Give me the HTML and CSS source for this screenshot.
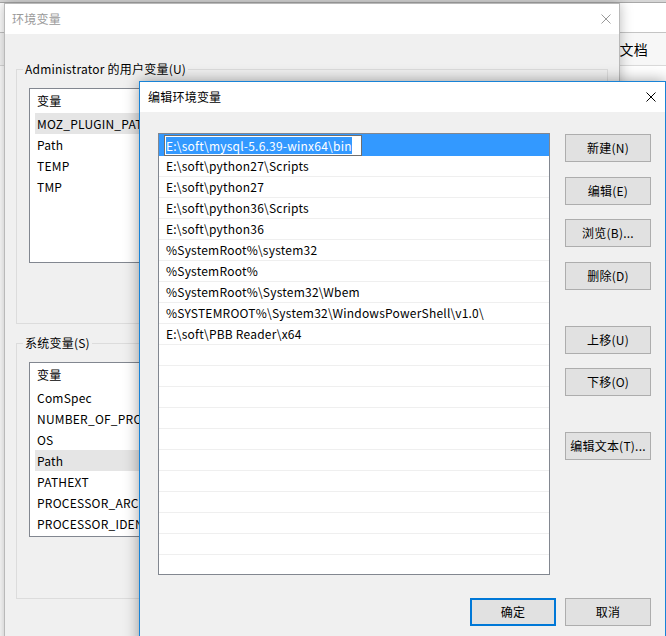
FILE: index.html
```html
<!DOCTYPE html>
<html lang="zh-CN">
<head>
<meta charset="utf-8">
<title>编辑环境变量</title>
<link rel="stylesheet" href="styles.css">
</head>
<body>
<div class="desktop">
  <div class="bgwin">
    <div class="bg-top"></div>
    <div class="bg-band1"></div>
    <div class="bg-band2">我的文档</div>
    <div class="bg-band3"></div>
  </div>

  <section class="win win-back">
    <header class="titlebar">
      <span class="title title-inactive">环境变量</span>
      <svg class="close-x" width="10" height="10" viewBox="0 0 10 10"><path d="M0.5 0.5 L9.5 9.5 M9.5 0.5 L0.5 9.5" stroke="#9a9a9a" stroke-width="1" fill="none"/></svg>
    </header>
    <div class="back-body">
      <fieldset class="group">
        <legend>Administrator 的用户变量(U)</legend>
        <div class="listview">
          <div class="lv-head">变量</div>
          <div class="lv-row lv-sel">MOZ_PLUGIN_PATH</div>
          <div class="lv-row">Path</div>
          <div class="lv-row">TEMP</div>
          <div class="lv-row">TMP</div>
        </div>
      </fieldset>
      <fieldset class="group group2">
        <legend>系统变量(S)</legend>
        <div class="listview">
          <div class="lv-head">变量</div>
          <div class="lv-row">ComSpec</div>
          <div class="lv-row">NUMBER_OF_PROCESSORS</div>
          <div class="lv-row">OS</div>
          <div class="lv-row lv-sel">Path</div>
          <div class="lv-row">PATHEXT</div>
          <div class="lv-row">PROCESSOR_ARCHITECTURE</div>
          <div class="lv-row">PROCESSOR_IDENTIFIER</div>
        </div>
      </fieldset>
    </div>
  </section>

  <section class="win win-front">
    <header class="titlebar">
      <span class="title">编辑环境变量</span>
      <svg class="close-x close-front" width="10" height="10" viewBox="0 0 10 10"><path d="M0.5 0.5 L9.5 9.5 M9.5 0.5 L0.5 9.5" stroke="#000" stroke-width="1" fill="none"/></svg>
    </header>
    <div class="front-body">
      <div class="main">
        <div class="pathlist">
          <div class="pl-row pl-sel"><span class="editbox"><span class="seltext">E:\soft\mysql-5.6.39-winx64\bin</span></span></div>
          <div class="pl-row">E:\soft\python27\Scripts</div>
          <div class="pl-row">E:\soft\python27</div>
          <div class="pl-row">E:\soft\python36\Scripts</div>
          <div class="pl-row">E:\soft\python36</div>
          <div class="pl-row">%SystemRoot%\system32</div>
          <div class="pl-row">%SystemRoot%</div>
          <div class="pl-row">%SystemRoot%\System32\Wbem</div>
          <div class="pl-row">%SYSTEMROOT%\System32\WindowsPowerShell\v1.0\</div>
          <div class="pl-row">E:\soft\PBB Reader\x64</div>
          <div class="pl-row"></div>
          <div class="pl-row"></div>
          <div class="pl-row"></div>
          <div class="pl-row"></div>
          <div class="pl-row"></div>
          <div class="pl-row"></div>
          <div class="pl-row"></div>
          <div class="pl-row"></div>
          <div class="pl-row"></div>
          <div class="pl-row"></div>
          <div class="pl-row"></div>
        </div>
        <div class="btn-col">
          <div class="btn-group">
            <button class="btn">新建(N)</button>
            <button class="btn">编辑(E)</button>
            <button class="btn">浏览(B)...</button>
            <button class="btn">删除(D)</button>
          </div>
          <div class="btn-group">
            <button class="btn">上移(U)</button>
            <button class="btn">下移(O)</button>
          </div>
          <div class="btn-group">
            <button class="btn">编辑文本(T)...</button>
          </div>
        </div>
      </div>
      <div class="footer">
        <button class="btn btn-default">确定</button>
        <button class="btn">取消</button>
      </div>
    </div>
  </section>
</div>
</body>
</html>
```

FILE: styles.css
```css
html, body {
  margin: 0;
  padding: 0;
}
body {
  width: 666px;
  height: 636px;
  overflow: hidden;
  font-family: "Noto Sans CJK SC", "Noto Sans", sans-serif;
  font-size: 12px;
  letter-spacing: 0.22px;
  color: #000;
  background: #ffffff;
}
.desktop {
  position: relative;
  width: 666px;
  height: 636px;
  overflow: hidden;
}

/* background explorer window */
.bgwin {
  position: absolute;
  left: 0;
  top: 0;
  width: 666px;
  height: 636px;
  background: #ffffff;
}
.bg-top {
  height: 2px;
  background: #d6d6d6;
  border-bottom: 1px solid #a8a8a8;
}
.bg-band1 {
  height: 29px;
  background: #ffffff;
  border-bottom: 1px solid #c4c4c4;
}
.bg-band2 {
  height: 32px;
  line-height: 32px;
  background: #f7f7f7;
  border-bottom: 1px solid #dadada;
  text-align: right;
  padding-right: 18px;
  font-size: 14px;
}
.bg-band3 {
  height: 20px;
  background: #fff;
}

/* windows */
.win {
  position: absolute;
  box-sizing: border-box;
  display: flex;
  flex-direction: column;
}
.win-back {
  left: 4px;
  top: 3px;
  width: 616px;
  height: 660px;
  border: 1px solid #b9b9b9;
  background: #f0f0f0;
  box-shadow: 0 0 12px rgba(0, 0, 0, 0.28);
}
.win-front {
  left: 139px;
  top: 81px;
  width: 527px;
  height: 580px;
  border: 1px solid #1883d7;
  background: #f0f0f0;
  box-shadow: 0 0 14px rgba(0, 0, 0, 0.38);
}
.titlebar {
  height: 30px;
  flex: none;
  background: #ffffff;
  display: flex;
  align-items: center;
  justify-content: space-between;
  padding: 0 8px 0 7px;
}
.win-front .titlebar {
  padding: 0 9px 0 8px;
}
.title {
  font-size: 12px;
  line-height: 16px;
}
.title-inactive {
  color: #9a9a9a;
}
.close-x {
  display: block;
}

/* back window body */
.back-body {
  flex: none;
  padding: 27px 11px 0 11px;
  display: flex;
  flex-direction: column;
  gap: 11px;
}
.group {
  flex: none;
  margin: 0;
  padding: 0 0 60px 0;
  border: 1px solid #dcdcdc;
  min-width: 0;
}
.group2 {
  padding-bottom: 61px;
}
.group legend {
  margin-left: 6px;
  padding: 0 2px;
  line-height: 16px;
  font-size: 12px;
}
.listview {
  margin: 11px 12px 0 12px;
  height: 175px;
  box-sizing: border-box;
  border: 1px solid #828790;
  background: #ffffff;
  overflow: hidden;
}
.lv-head {
  height: 24px;
  line-height: 24px;
  padding-left: 7px;
}
.lv-row {
  height: 21px;
  line-height: 21px;
  margin-left: 5px;
  padding-left: 2px;
  white-space: nowrap;
}
.lv-sel {
  background: #e5e5e5;
}

/* front dialog body */
.front-body {
  padding: 21px 14px 0 18px;
  display: flex;
  flex-direction: column;
}
.main {
  display: flex;
  gap: 15px;
}
.pathlist {
  width: 392px;
  height: 442px;
  box-sizing: border-box;
  border: 1px solid #828790;
  background: #ffffff;
  overflow: hidden;
}
.pl-row {
  height: 20px;
  line-height: 20px;
  border-bottom: 1px solid #efefef;
  padding-left: 7px;
  white-space: nowrap;
}
.pl-sel {
  height: 21px;
  background: #3399ff;
  border-bottom-color: #3399ff;
  padding-left: 5px;
}
.editbox {
  display: inline-block;
  vertical-align: top;
  box-sizing: border-box;
  width: 198px;
  height: 21px;
  margin-top: 1px;
  border: 1px solid #6f6f6f;
  background: #ffffff;
  padding: 1px 0 0 1px;
  line-height: 17px;
}
.seltext {
  background: #3399ff;
  color: #ffffff;
  display: inline-block;
}
.btn-col {
  margin-top: 1px;
  display: flex;
  flex-direction: column;
  gap: 36px;
}
.btn-group {
  display: flex;
  flex-direction: column;
  gap: 14.5px;
}
.btn {
  width: 86px;
  height: 28px;
  box-sizing: border-box;
  border: 1px solid #adadad;
  background: #e1e1e1;
  font-family: "Noto Sans CJK SC", "Noto Sans", sans-serif;
  font-size: 12px;
  letter-spacing: 0.22px;
  color: #000;
  padding: 0;
  line-height: 16px;
}
.btn-default {
  border: 2px solid #0078d7;
}
.footer {
  margin-top: 23px;
  display: flex;
  justify-content: flex-end;
  gap: 9px;
}
```
